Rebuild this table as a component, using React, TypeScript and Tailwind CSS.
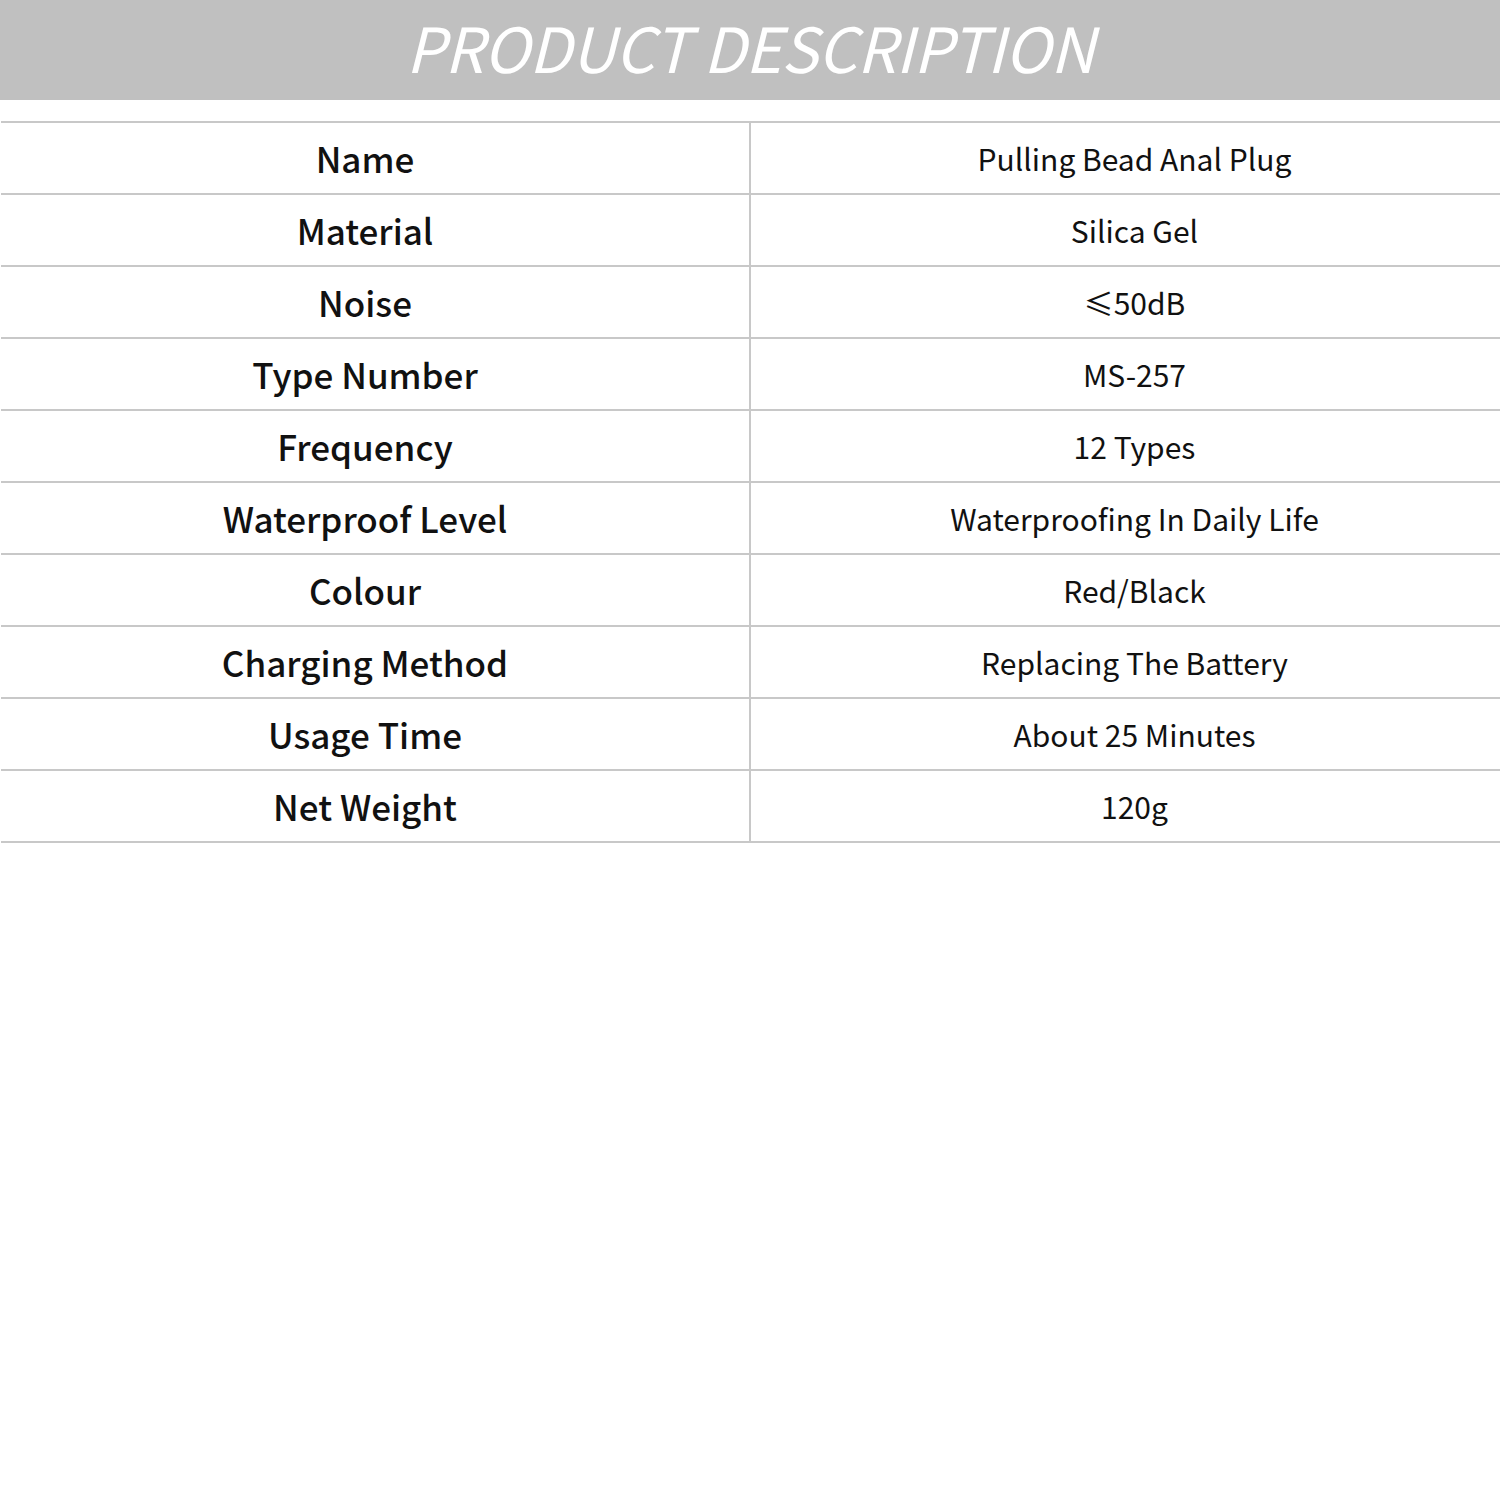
const rows: [string, string][] = [
  ['Name', 'Pulling Bead Anal Plug'],
  ['Material', 'Silica Gel'],
  ['Noise', '≤50dB'],
  ['Type Number', 'MS-257'],
  ['Frequency', '12 Types'],
  ['Waterproof Level', 'Waterproofing In Daily Life'],
  ['Colour', 'Red/Black'],
  ['Charging Method', 'Replacing The Battery'],
  ['Usage Time', 'About 25 Minutes'],
  ['Net Weight', '120g'],
]

export default function App() {
  return (
    <div
      className="w-[1500px] h-[1500px] bg-white text-[#111]"
      style={{ fontFamily: '"Noto Sans CJK SC", "Noto Sans", sans-serif' }}
    >
      {/* Header band */}
      <div className="h-[100px] bg-[#c0c0c0] flex items-center justify-center">
        <h1 className="text-[62px] italic font-normal text-white tracking-[-0.5px] leading-none mt-[-8px]">
          PRODUCT DESCRIPTION
        </h1>
      </div>

      {/* Spec table */}
      <div className="mt-[21px] ml-[1px] border-t-2 border-[#c8c8c8]">
        {rows.map(([label, value]) => (
          <div key={label} className="flex h-[72px] border-b-2 border-[#c8c8c8]">
            <div className="w-[750px] flex items-center justify-center pr-[20px] border-r-2 border-[#c8c8c8] text-[35px] font-medium">
              {label}
            </div>
            <div className="flex-1 flex items-center justify-center pl-[18px] text-[30px] font-normal">
              {value}
            </div>
          </div>
        ))}
      </div>
    </div>
  )
}
